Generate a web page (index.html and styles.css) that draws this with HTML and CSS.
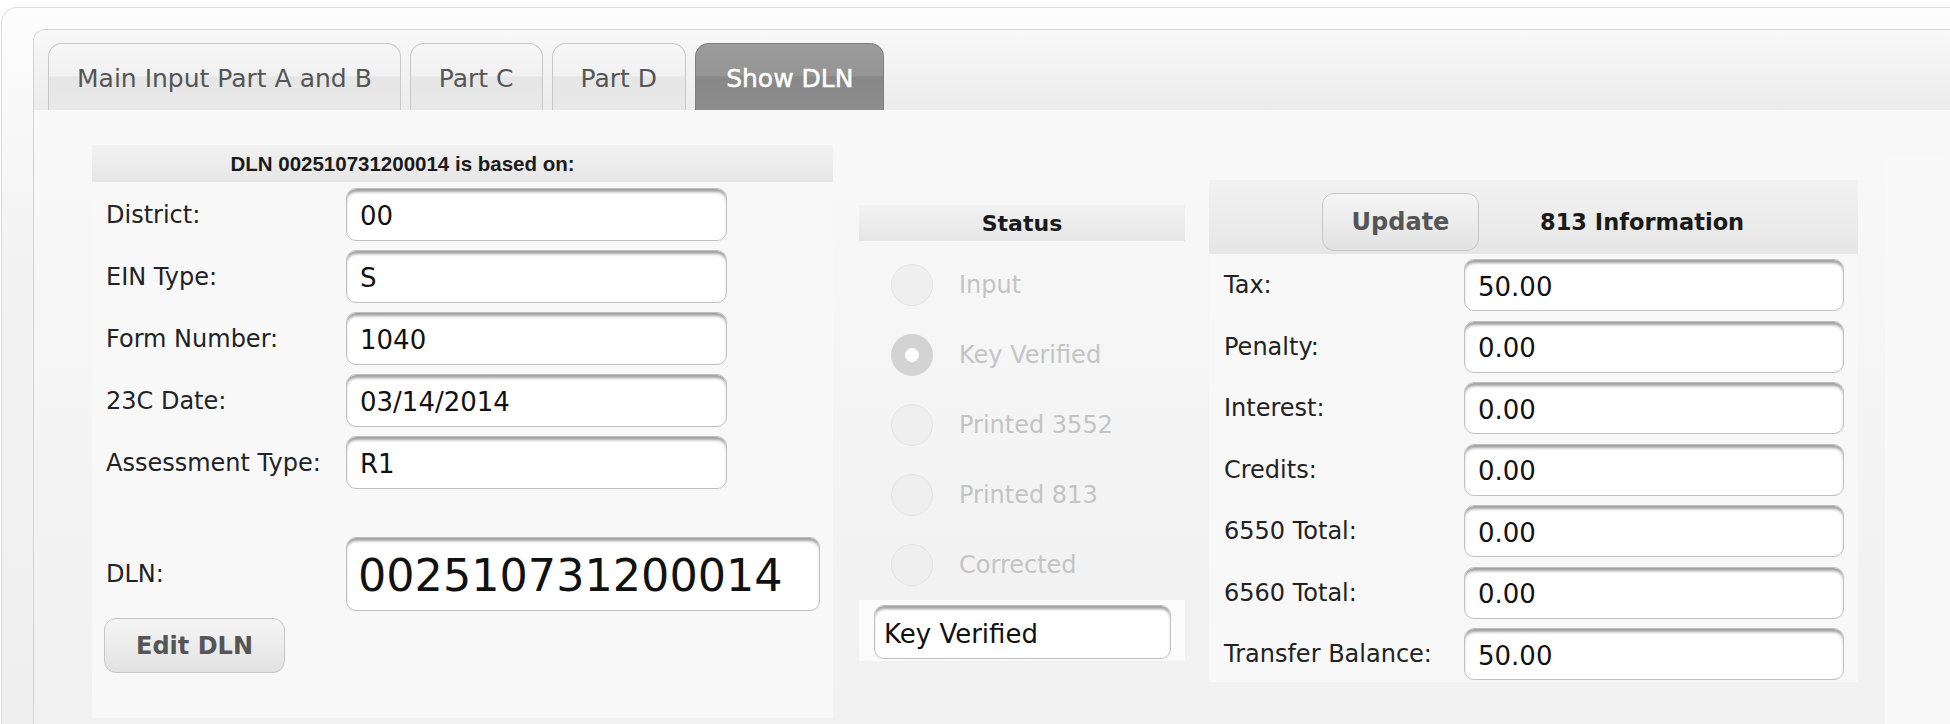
FILE: index.html
```html
<!DOCTYPE html>
<html lang="en">
<head>
<meta charset="utf-8">
<title>Show DLN</title>
<link rel="stylesheet" href="styles.css">
</head>
<body>
<div class="outer">
  <div class="tabs">
    <ul class="tabnav">
      <li class="tab">Main Input Part A and B</li>
      <li class="tab">Part C</li>
      <li class="tab">Part D</li>
      <li class="tab active">Show DLN</li>
    </ul>
    <div class="panel">
      <section class="fs fs-dln">
        <div class="fs-head head-dln">DLN 002510731200014 is based on:</div>
        <div class="fs-body">
          <div class="row first"><label class="lbl">District:</label><input class="field" value="00" readonly></div>
          <div class="row"><label class="lbl">EIN Type:</label><input class="field" value="S" readonly></div>
          <div class="row"><label class="lbl">Form Number:</label><input class="field" value="1040" readonly></div>
          <div class="row"><label class="lbl">23C Date:</label><input class="field" value="03/14/2014" readonly></div>
          <div class="row"><label class="lbl">Assessment Type:</label><input class="field" value="R1" readonly></div>
          <div class="row row-dln"><label class="lbl">DLN:</label><input class="field field-big" value="002510731200014" readonly></div>
          <button class="btn btn-edit" type="button">Edit DLN</button>
        </div>
      </section>

      <section class="fs fs-status">
        <div class="fs-head head-status">Status</div>
        <ul class="radios">
          <li class="radio-row"><span class="radio"></span><span class="radio-lbl">Input</span></li>
          <li class="radio-row"><span class="radio checked"></span><span class="radio-lbl">Key Verified</span></li>
          <li class="radio-row"><span class="radio"></span><span class="radio-lbl">Printed 3552</span></li>
          <li class="radio-row"><span class="radio"></span><span class="radio-lbl">Printed 813</span></li>
          <li class="radio-row"><span class="radio"></span><span class="radio-lbl">Corrected</span></li>
        </ul>
        <div class="status-box"><input class="field field-status" value="Key Verified" readonly></div>
      </section>

      <section class="fs fs-813">
        <div class="fs-head head-813">
          <button class="btn btn-update" type="button">Update</button>
          <span class="head-813-title">813 Information</span>
        </div>
        <div class="fs-body body-813">
          <div class="row row-r first"><label class="lbl">Tax:</label><input class="field field-r" value="50.00" readonly></div>
          <div class="row row-r"><label class="lbl">Penalty:</label><input class="field field-r" value="0.00" readonly></div>
          <div class="row row-r"><label class="lbl">Interest:</label><input class="field field-r" value="0.00" readonly></div>
          <div class="row row-r"><label class="lbl">Credits:</label><input class="field field-r" value="0.00" readonly></div>
          <div class="row row-r"><label class="lbl">6550 Total:</label><input class="field field-r" value="0.00" readonly></div>
          <div class="row row-r"><label class="lbl">6560 Total:</label><input class="field field-r" value="0.00" readonly></div>
          <div class="row row-r"><label class="lbl">Transfer Balance:</label><input class="field field-r" value="50.00" readonly></div>
        </div>
      </section>

      <div class="blank"></div>
    </div>
  </div>
</div>
</body>
</html>
```
FILE: styles.css
```css
html, body {
  margin: 0;
  height: 100%;
  overflow: hidden;
  background: #ffffff;
  font-family: "DejaVu Sans", "Liberation Sans", sans-serif;
}

.outer {
  margin: 7px 0 0 1px;
  padding: 21px 0 0 31px;
  height: 900px;
  border: 1px solid #dcdcdc;
  border-right: none;
  border-bottom: none;
  border-top-left-radius: 16px;
  background: linear-gradient(#fdfdfd, #f2f2f2 260px, #eeeeee);
}

.tabs {
  height: 900px;
  border: 1px solid #d3d3d3;
  border-right: none;
  border-bottom: none;
  border-top-left-radius: 12px;
  background: #f7f7f7;
  overflow: hidden;
}

.tabnav {
  display: flex;
  gap: 9px;
  margin: 0;
  padding: 13px 0 0 14px;
  height: 67px;
  list-style: none;
  background: linear-gradient(#f8f8f8, #ececec);
}

.tab {
  box-sizing: border-box;
  flex-shrink: 0;
  height: 67px;
  display: flex;
  align-items: center;
  padding: 2px 28px 0;
  border: 1px solid #c8c8c8;
  border-bottom: none;
  border-radius: 14px 14px 0 0;
  font-size: 25px;
  color: #555555;
  white-space: nowrap;
  background: linear-gradient(#f7f7f7 0%, #f1f1f1 48%, #e6e6e6 50%, #e9e9e9 100%);
}

.tab.active {
  padding: 2px 30px 0;
  color: #ffffff;
  border-color: #7e7e7e;
  -webkit-text-stroke: 0.5px #ffffff;
  background: linear-gradient(#9b9b9b 0%, #959595 48%, #888888 50%, #8d8d8d 100%);
}

.panel {
  display: flex;
  align-items: flex-start;
  padding-left: 58px;
  height: 800px;
  background: linear-gradient(#f9f9f9, #f3f3f3 400px, #efefef);
}

.fs {
  flex-shrink: 0;
}

.fs-head {
  background: linear-gradient(#f2f2f2, #e6e6e6);
  color: #1a1a1a;
  font-weight: bold;
  display: flex;
  align-items: center;
  justify-content: center;
}

/* left fieldset */
.fs-dln {
  width: 741px;
  margin-top: 35px;
  background: #f8f8f8;
}

.head-dln {
  height: 37px;
  font-family: "Liberation Sans", "DejaVu Sans", sans-serif;
  font-size: 20.5px;
  padding: 1px 120px 0 0;
  box-sizing: border-box;
}

.fs-dln .fs-body {
  padding: 0 0 45px 0;
}

.row {
  display: flex;
  align-items: center;
  height: 53px;
  margin-top: 9px;
}

.row.first {
  margin-top: 6px;
}

.lbl {
  box-sizing: border-box;
  flex-shrink: 0;
  width: 254px;
  padding-left: 14px;
  font-size: 24px;
  color: #222222;
  white-space: nowrap;
}

.field {
  box-sizing: border-box;
  flex-shrink: 0;
  width: 381px;
  height: 53px;
  margin: 0;
  padding: 3px 0 0 13px;
  border: 1px solid #c0c0c0;
  border-radius: 10px;
  background: #ffffff;
  box-shadow: inset 0 4px 3px -1px rgba(0, 0, 0, 0.38);
  font-family: "DejaVu Sans", sans-serif;
  font-size: 26px;
  color: #111111;
  outline: none;
}

.row-dln {
  height: 74px;
  margin-top: 48px;
}

.field-big {
  width: 474px;
  height: 74px;
  padding-left: 11px;
  font-size: 44.5px;
}

.btn {
  box-sizing: border-box;
  border: 1px solid #c6c6c6;
  border-radius: 12px;
  background: linear-gradient(#f5f5f5, #ececec 50%, #e2e2e2);
  font-family: "DejaVu Sans", sans-serif;
  font-weight: bold;
  font-size: 24px;
  color: #555555;
  padding: 0;
}

.btn-edit {
  display: block;
  width: 181px;
  height: 55px;
  margin: 7px 0 0 12px;
}

/* status */
.fs-status {
  width: 326px;
  margin: 95px 0 0 26px;
}

.head-status {
  height: 36px;
  font-size: 22px;
}

.radios {
  list-style: none;
  margin: 0;
  padding: 9px 0 0 0;
}

.radio-row {
  display: flex;
  align-items: center;
  height: 70px;
  padding-left: 32px;
}

.radio {
  box-sizing: border-box;
  flex-shrink: 0;
  width: 42px;
  height: 42px;
  border-radius: 50%;
  background: #efefef;
  border: 1px solid #e4e4e4;
}

.radio.checked {
  background: #ffffff;
  border: 14px solid #d3d3d3;
}

.radio-lbl {
  margin-left: 26px;
  font-size: 24px;
  color: #c4c4c4;
}

.status-box {
  height: 61px;
  box-sizing: border-box;
  padding: 5px 14px 0 15px;
  background: #fbfbfb;
}

.field-status {
  width: 297px;
  height: 54px;
  padding-left: 9px;
}

/* 813 information */
.fs-813 {
  width: 649px;
  margin: 70px 0 0 24px;
  background: #f8f8f8;
}

.head-813 {
  box-sizing: border-box;
  height: 74px;
  padding-top: 10px;
  justify-content: flex-start;
}

.btn-update {
  flex-shrink: 0;
  width: 157px;
  height: 58px;
  margin-left: 113px;
}

.head-813-title {
  margin-left: 61px;
  font-size: 22.5px;
}

.body-813 {
  padding-bottom: 2px;
}

.row-r {
  height: 52px;
  margin-top: 9.5px;
}

.row-r.first {
  margin-top: 5px;
}

.row-r .lbl {
  width: 255px;
  padding-left: 15px;
}

.field-r {
  width: 380px;
  height: 52px;
}

.blank {
  flex-shrink: 0;
  width: 200px;
  height: 800px;
  margin: 47px 0 0 27px;
  background: #f9f9f9;
}
```
